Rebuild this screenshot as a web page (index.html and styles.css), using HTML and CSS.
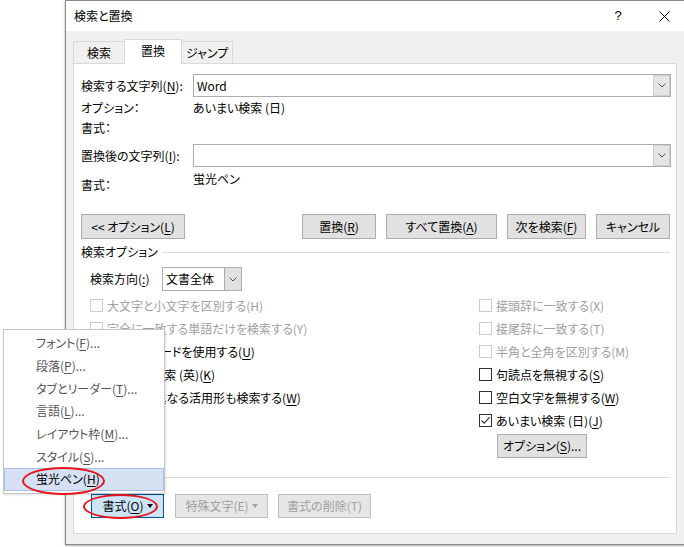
FILE: index.html
```html
<!DOCTYPE html>
<html lang="ja">
<head>
<meta charset="utf-8">
<title>検索と置換</title>
<link rel="stylesheet" href="styles.css">
</head>
<body>
<div class="dialog">
  <div class="titlebar">
    <span class="title">検索と置換</span>
    <span class="cap help">?</span>
    <span class="cap close"><svg width="11" height="11" viewBox="0 0 11 11"><path d="M0.5 0.5 L10.5 10.5 M10.5 0.5 L0.5 10.5" stroke="#000" stroke-width="1" fill="none"/></svg></span>
  </div>
  <div class="tabs">
    <div class="tab">検索</div>
    <div class="tab active">置換</div>
    <div class="tab">ジャンプ</div>
  </div>
  <div class="panel">
    <div class="frow r1">
      <span class="lbl">検索する文字列(<u>N</u>):</span>
      <div class="combo"><span class="val">Word</span><span class="drop"><svg width="8" height="5" viewBox="0 0 8 5"><path d="M0.5 0.5 L4 4 L7.5 0.5" stroke="#555" fill="none"/></svg></span></div>
    </div>
    <div class="frow r2">
      <span class="lbl">オプション：</span>
      <span>あいまい検索 (日)</span>
    </div>
    <div class="frow r3">
      <span class="lbl">書式：</span>
    </div>
    <div class="frow r4">
      <span class="lbl">置換後の文字列(<u>I</u>):</span>
      <div class="combo"><span class="val"></span><span class="drop"><svg width="8" height="5" viewBox="0 0 8 5"><path d="M0.5 0.5 L4 4 L7.5 0.5" stroke="#555" fill="none"/></svg></span></div>
    </div>
    <div class="frow r5">
      <span class="lbl">書式：</span>
      <span class="fval">蛍光ペン</span>
    </div>
    <div class="btnrow">
      <div class="btn b-opt">&lt;&lt; オプション(<u>L</u>)</div>
      <div class="btn b-rep">置換(<u>R</u>)</div>
      <div class="btn b-all">すべて置換(<u>A</u>)</div>
      <div class="btn b-next">次を検索(<u>F</u>)</div>
      <div class="btn b-cancel">キャンセル</div>
    </div>
    <div class="gtitle"><span>検索オプション</span><span class="rule"></span></div>
    <div class="dir">
      <span class="lbl">検索方向(<u>:</u>)</span>
      <div class="select"><span class="val">文書全体</span><span class="drop"><svg width="8" height="5" viewBox="0 0 8 5"><path d="M0.5 0.5 L4 4 L7.5 0.5" stroke="#555" fill="none"/></svg></span></div>
    </div>
    <div class="checks">
      <div class="col col1">
        <div class="chk dis"><span class="box"></span><span>大文字と小文字を区別する(H)</span></div>
        <div class="chk dis"><span class="box"></span><span>完全に一致する単語だけを検索する(Y)</span></div>
        <div class="chk"><span class="box"></span><span>ワイルドカードを使用する(<u>U</u>)</span></div>
        <div class="chk"><span class="box"></span><span>あいまい検索 (英)(<u>K</u>)</span></div>
        <div class="chk"><span class="box"></span><span>英単語の異なる活用形も検索する(<u>W</u>)</span></div>
      </div>
      <div class="col col2">
        <div class="chk dis"><span class="box"></span><span>接頭辞に一致する(X)</span></div>
        <div class="chk dis"><span class="box"></span><span>接尾辞に一致する(T)</span></div>
        <div class="chk dis"><span class="box"></span><span>半角と全角を区別する(M)</span></div>
        <div class="chk"><span class="box"></span><span>句読点を無視する(<u>S</u>)</span></div>
        <div class="chk"><span class="box"></span><span>空白文字を無視する(<u>W</u>)</span></div>
        <div class="chk"><span class="box"><svg width="11" height="11" viewBox="0 0 11 11"><path d="M1.5 5.5 L4.2 8.2 L9.7 2.2" stroke="#333" stroke-width="1.1" fill="none"/></svg></span><span>あいまい検索 (日)(<u>J</u>)</span></div>
        <div class="btn optbtn">オプション(<u>S</u>)...</div>
      </div>
    </div>
    <div class="sep"></div>
    <div class="bottom">
      <div class="btn b-fmt">書式(<u>O</u>)<span class="tri"></span></div>
      <div class="btn disabled b-spec">特殊文字(E)<span class="tri"></span></div>
      <div class="btn disabled b-clear">書式の削除(T)</div>
    </div>
  </div>
</div>

<div class="menu">
  <div class="mi">フォント(<u>F</u>)...</div>
  <div class="mi">段落(<u>P</u>)...</div>
  <div class="mi">タブとリーダー(<u>T</u>)...</div>
  <div class="mi">言語(<u>L</u>)...</div>
  <div class="mi">レイアウト枠(<u>M</u>)...</div>
  <div class="mi">スタイル(<u>S</u>)...</div>
  <div class="mi hl">蛍光ペン(<u>H</u>)</div>
</div>

<div class="ring ring-menu"></div>
<div class="ring ring-btn"></div>
</body>
</html>
```

FILE: styles.css
```css
* { box-sizing: border-box; }
html, body { margin: 0; padding: 0; }
body {
  width: 684px;
  height: 547px;
  overflow: hidden;
  position: relative;
  background: #fff;
  font-family: "Noto Sans CJK JP", "Noto Sans", sans-serif;
  font-size: 12px;
  line-height: 16px;
  color: #000;
  font-feature-settings: "palt";
}
u {
  text-decoration: underline;
  text-decoration-thickness: 1px;
  text-underline-offset: 2px;
}

/* dialog window */
.dialog {
  position: absolute;
  left: 65px;
  top: 0;
  width: 623px;
  height: 545px;
  border: 1px solid #8a8a8a;
  background: #f0f0f0;
  box-shadow: 0 1px 2px rgba(0, 0, 0, 0.35);
}
.titlebar {
  height: 30px;
  background: #fff;
  display: flex;
  align-items: center;
}
.title { flex: 1; padding-left: 8px; }
.cap {
  width: 46px;
  height: 30px;
  display: flex;
  align-items: center;
  justify-content: center;
}
.help { font-family: "Liberation Sans", sans-serif; font-size: 13px; }

/* tabs */
.tabs {
  display: flex;
  align-items: flex-end;
  height: 24px;
  margin: 8px 0 0 7px;
}
.tab {
  width: 52px;
  height: 22px;
  border: 1px solid #d9d9d9;
  border-bottom: none;
  background: #f0f0f0;
  display: flex;
  align-items: center;
  justify-content: center;
}
.tab + .tab { margin-left: -1px; }
.tab.active {
  width: 58px;
  height: 25px;
  margin-bottom: -1px;
  padding-bottom: 2px;
  background: #fff;
  position: relative;
  z-index: 1;
}

/* panel */
.panel {
  margin-left: 7px;
  width: 604px;
  height: 471px;
  border: 1px solid #d9d9d9;
  background: #fff;
  padding: 10px 6px 0 7px;
}
.frow { display: flex; align-items: center; }
.frow .lbl { width: 112px; flex: none; }
.r1 { height: 23px; }
.r2 { height: 22px; }
.r3 { height: 18px; }
.r4 { height: 23px; margin-top: 7px; }
.r5 { height: 28px; align-items: flex-start; }
.r5 .lbl { padding-top: 10px; }
.r5 .fval { padding-top: 4px; }

.combo {
  flex: none;
  width: 478px;
  height: 23px;
  border: 1px solid #adadad;
  display: flex;
  align-items: stretch;
}
.combo .val { flex: 1; padding-left: 3px; line-height: 21px; }
.drop {
  width: 17px;
  flex: none;
  background: #e5e5e5;
  border: 1px solid #cfcfcf;
  display: flex;
  align-items: center;
  justify-content: center;
}

/* buttons */
.btn {
  flex: none;
  height: 25px;
  border: 1px solid #adadad;
  background: #e1e1e1;
  display: flex;
  align-items: center;
  justify-content: center;
  white-space: nowrap;
}
.btnrow { display: flex; gap: 10px; margin-top: 19px; }
.b-opt { width: 104px; margin-right: auto; }
.b-rep { width: 74px; }
.b-all { width: 111px; }
.b-next { width: 79px; }
.b-cancel { width: 74px; }

/* search options */
.gtitle {
  display: flex;
  align-items: center;
  height: 16px;
  margin-top: 5px;
}
.gtitle .rule {
  flex: 1;
  height: 1px;
  background: #dcdcdc;
  margin-left: 4px;
}
.dir {
  display: flex;
  align-items: center;
  height: 24px;
  margin-top: 7px;
  padding-left: 9px;
}
.dir .lbl { width: 72px; }
.select {
  width: 80px;
  height: 24px;
  border: 1px solid #adadad;
  display: flex;
}
.select .val { flex: 1; padding-left: 3px; line-height: 22px; }
.select .drop { border: none; border-left: 1px solid #adadad; background: #e1e1e1; }

.checks { display: flex; margin-top: 3px; padding-left: 9px; }
.col1 { width: 389px; flex: none; }
.chk {
  height: 23px;
  display: flex;
  align-items: center;
  gap: 4px;
  white-space: nowrap;
}
.box {
  width: 13px;
  height: 13px;
  flex: none;
  border: 1px solid #333;
  background: #fff;
  display: flex;
  align-items: center;
  justify-content: center;
}
.dis { color: #a0a0a0; }
.dis .box { border-color: #cccccc; }
.optbtn { width: 90px; height: 24px; margin: 2px 0 0 18px; }

.sep { height: 1px; background: #dcdcdc; margin-top: 19px; }

.bottom { display: flex; margin-top: 16px; padding-left: 10px; }
.bottom .btn { height: 24px; }
.b-fmt {
  width: 73px;
  background: #cce4f7;
  border-color: #005499;
}
.b-spec { width: 93px; margin-left: 11px; }
.b-clear { width: 93px; margin-left: 10px; }
.disabled { color: #a0a0a0; border-color: #bfbfbf; background: #e6e6e6; }
.tri {
  display: inline-block;
  width: 0;
  height: 0;
  margin-left: 3px;
  border-left: 3.5px solid transparent;
  border-right: 3.5px solid transparent;
  border-top: 4px solid #000;
}
.disabled .tri { border-top-color: #a0a0a0; }

/* popup menu */
.menu {
  position: absolute;
  left: 3px;
  top: 329px;
  width: 162px;
  height: 165px;
  border: 1px solid #c6c6c6;
  background: #fff;
  padding: 2px 0;
  color: #555;
  box-shadow: 1px 1px 2px rgba(0, 0, 0, 0.12);
}
.mi {
  height: 22.67px;
  display: flex;
  align-items: center;
  padding-left: 31px;
  border: 1px solid transparent;
}
.mi.hl {
  background: #d5e1f2;
  border-color: #a6bfe6;
  color: #000;
}

/* annotation rings */
.ring {
  position: absolute;
  border: 2px solid #e5131d;
  border-radius: 50%;
}
.ring-menu { left: 22px; top: 467px; width: 83px; height: 28px; }
.ring-btn { left: 83px; top: 494px; width: 75px; height: 25px; }
```
